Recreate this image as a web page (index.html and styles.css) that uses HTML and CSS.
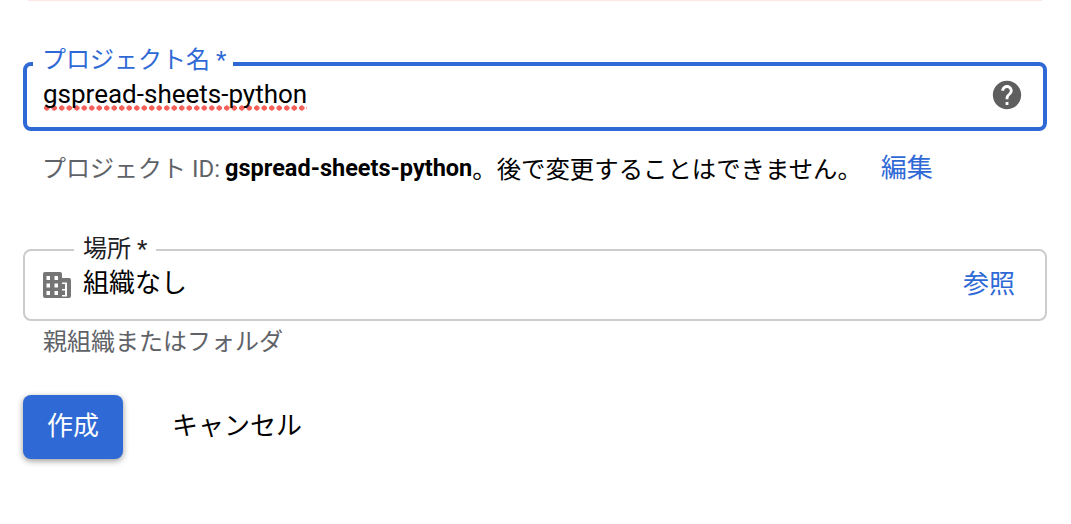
FILE: index.html
```html
<!DOCTYPE html>
<html lang="ja">
<head>
    <meta charset="UTF-8">
    <meta name="viewport" content="width=device-width, initial-scale=1.0">
    <title>新しいプロジェクト</title>
    <link rel="stylesheet" href="styles.css">
</head>
<body>
    <div class="top-rule"></div>

    <fieldset class="field field-focus">
        <legend>プロジェクト名 *</legend>
        <div class="field-row">
            <span class="field-value"><span class="misspelled">gspread-sheets-python</span></span>
            <svg class="help-icon" viewBox="0 0 24 24" width="34" height="34" aria-hidden="true">
                <path fill="#5f5f5f" d="M12 2C6.48 2 2 6.48 2 12s4.480 10 10 10 10-4.480 10-10S17.520 2 12 2zm1 17h-2v-2h2v2zm2.070-7.750l-.9.920C13.450 12.900 13 13.500 13 15h-2v-.5c0-1.100.45-2.100 1.170-2.830l1.240-1.260c.37-.36.59-.86.59-1.410 0-1.100-.9-2-2-2s-2 .9-2 2H8c0-2.210 1.790-4 4-4s4 1.790 4 4c0 .88-.36 1.680-.93 2.250z"/>
            </svg>
        </div>
    </fieldset>

    <div class="project-id">
        <span class="muted">プロジェクト ID:</span>
        <strong>gspread-sheets-python</strong><span class="id-note">。後で変更することはできません。</span>
        <a class="edit-link" href="#">編集</a>
    </div>

    <fieldset class="field field-location">
        <legend>場所 *</legend>
        <div class="field-row">
            <svg class="org-icon" viewBox="0 0 28 26" width="28" height="26" aria-hidden="true">
                <path fill="#757575" fill-rule="evenodd" d="M2 0h15a2 2 0 0 1 2 2v4h7a2 2 0 0 1 2 2v16a2 2 0 0 1-2 2H2a2 2 0 0 1-2-2V2a2 2 0 0 1 2-2zM3.500 4v4H7V4H3.500zm8 0v4H15V4h-3.500zM3.500 11.500v4H7v-4H3.500zm8 0v4H15v-4h-3.500zM3.500 19v4H7v-4H3.500zm8 0v4H15v-4h-3.500zM19 10.500V12h3v5h-3v1.500h3V23h-3v1.500h5v-14h-5z"/>
            </svg>
            <span class="field-value location-value">組織なし</span>
            <a class="browse-link" href="#">参照</a>
        </div>
    </fieldset>
    <div class="hint">親組織またはフォルダ</div>

    <div class="actions">
        <button class="btn-primary">作成</button>
        <button class="btn-text">キャンセル</button>
    </div>
</body>
</html>
```

FILE: styles.css
```css
body {
    margin: 0;
    padding: 0 24px 40px 23px;
    background-color: #fff;
    color: #000;
    font-family: Roboto, "Noto Sans CJK JP", sans-serif;
    font-size: 24px;
}
.top-rule {
    height: 1px;
    margin: 0 5px 0 5px;
    background-color: #fde7e5;
}
.field {
    margin: 0;
    padding: 0 18px;
    border: 2px solid #ccc;
    border-radius: 8px;
    min-width: 0;
    box-sizing: border-box;
}
.field legend {
    font-size: 24px;
    line-height: 30px;
    height: 30px;
}
.field-row {
    display: flex;
    align-items: center;
}
.field-focus {
    margin-top: 48px;
    height: 82px;
    padding: 0 16px;
    border: 4px solid #2f69d6;
}
.field-focus legend {
    color: #2f69d6;
    margin-left: -10px;
    padding: 0 7px 0 9px;
    line-height: 22px;
}
.field-focus .field-row {
    justify-content: space-between;
    height: 46px;
    margin-top: -9px;
}
.field-value {
    font-size: 26px;
    line-height: 34px;
}
.misspelled {
    display: inline-block;
    background-image: radial-gradient(circle at center, #f4605a 2.4px, transparent 2.9px);
    background-size: 7.5px 6px;
    background-repeat: repeat-x;
    background-position: left bottom;
    padding-bottom: 2px;
    line-height: 30px;
    margin-top: 4px;
}
.help-icon {
    flex: none;
    margin: 4px 3px 0 0;
}
.project-id {
    display: flex;
    align-items: center;
    height: 34px;
    margin: 20px 0 0 19px;
    white-space: pre;
}
.muted {
    color: #5f6368;
    margin-bottom: 3px;
}
.project-id strong {
    font-size: 23.5px;
    font-weight: 700;
    margin-left: 5px;
}
.id-note {
    font-size: 24.4px;
    margin-bottom: 2px;
}
.edit-link {
    color: #2f69d6;
    font-size: 26px;
    text-decoration: none;
    margin: 0 0 5px 19px;
}
.field-location {
    margin-top: 50px;
    height: 86px;
}
.field-location legend {
    margin-left: 31px;
    padding: 0 9px;
    color: #202124;
    line-height: 28px;
}
.field-location .field-row {
    height: 40px;
    margin-top: -2px;
}
.org-icon {
    flex: none;
    margin: 3px 0 0 0;
}
.location-value {
    flex: 1;
    margin-left: 12px;
}
.browse-link {
    color: #2f69d6;
    text-decoration: none;
    font-size: 26px;
    margin: 0 12px 4px 0;
}
.hint {
    margin: 4px 0 0 20px;
    color: #5f6368;
    font-size: 24px;
    line-height: 34px;
}
.actions {
    display: flex;
    align-items: center;
    gap: 49px;
    margin-top: 36px;
}
.btn-primary, .btn-text {
    font-family: inherit;
    font-size: 26px;
    border: none;
    padding: 0 0 8px;
    cursor: pointer;
}
.btn-primary {
    width: 100px;
    height: 64px;
    background-color: #2f69d6;
    color: #fff;
    border-radius: 8px;
    box-shadow: 0 2px 6px rgba(0,0,0,0.4);
}
.btn-text {
    height: 64px;
    background: none;
    color: #000;
}
```
